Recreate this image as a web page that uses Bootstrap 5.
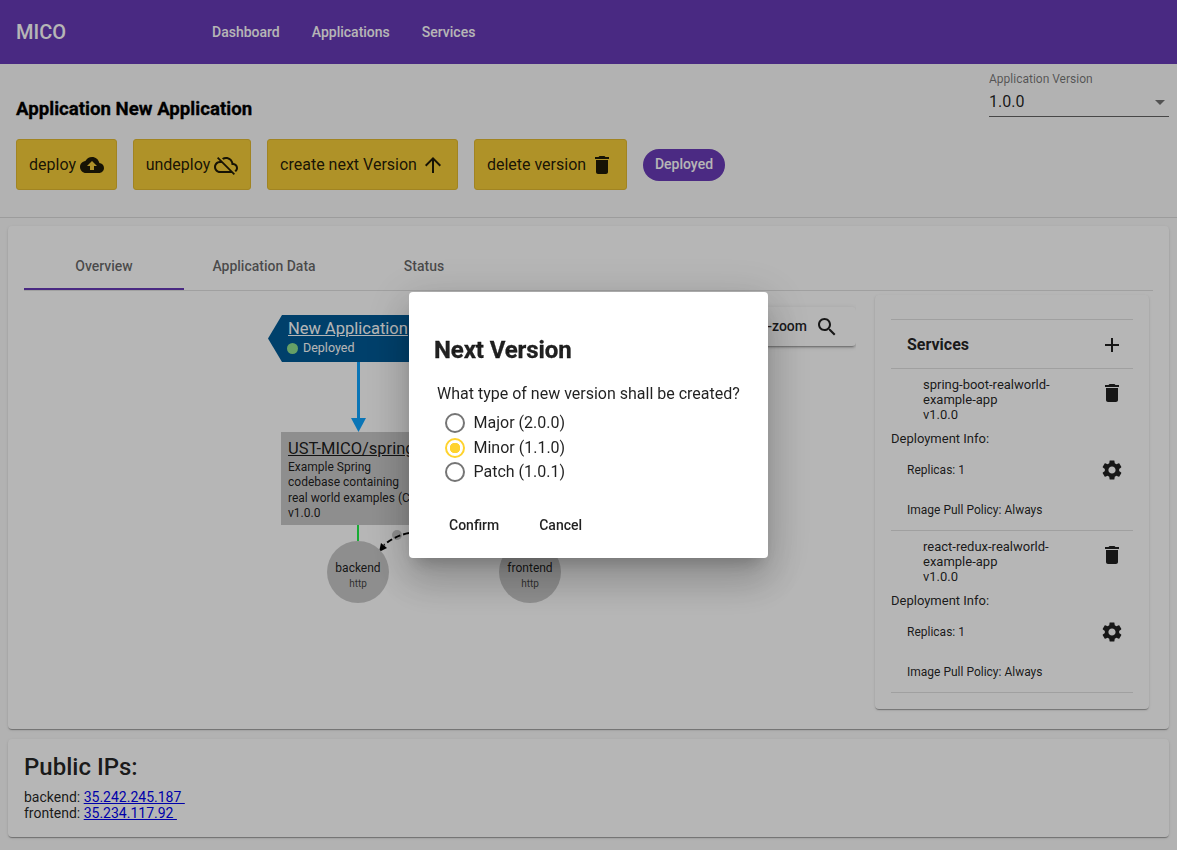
<!DOCTYPE html>
<html lang="en">
<head>
<meta charset="utf-8">
<title>MICO</title>
<link rel="stylesheet" href="https://cdn.jsdelivr.net/npm/bootstrap@5.3.0/dist/css/bootstrap.min.css">
<style>
html,body{height:850px;overflow:hidden}
body{font-family:Roboto,"Liberation Sans",sans-serif;background:#fafafa;color:rgba(0,0,0,.87);font-size:14px}
svg{display:block;fill:currentColor}
.topbar{height:64px;background:#673ab7;color:#fff;padding:0 16px}
.brand{font-size:20px;font-weight:500;width:180px}
.toplink{font-size:14px;font-weight:500;color:#fff;padding:0 16px;text-decoration:none}
.apphead{height:154px;padding:0 8px 0 16px;border-bottom:1px solid rgba(0,0,0,.12)}
.apptitle{font-size:18.65px;font-weight:700;color:#000;margin:0;line-height:24px;padding-top:33px;-webkit-text-stroke:.3px #000}
.verbox{width:180px;margin-top:8px;height:45px;border-bottom:1px solid rgba(0,0,0,.6);flex:none}
.verlabel{font-size:12px;line-height:14px;color:rgba(0,0,0,.54)}
.verline{margin-top:6px}
.vervalue{font-size:16px;line-height:20px}
.vercaret{width:0;height:0;border-left:5px solid transparent;border-right:5px solid transparent;border-top:5px solid rgba(0,0,0,.54);margin-right:4px}
.actionrow{margin-top:18px;gap:16px}
.actbtn{height:51px;padding:0;background:#f6cd38;border:1px solid #e2ba30;border-radius:3px;color:rgba(0,0,0,.87);font-size:16px;display:flex;align-items:center;justify-content:center;gap:4px;line-height:20px}
.wdeploy{width:101px}
.wundeploy{width:118px}
.wnext{width:191px}
.wdelete{width:153px}
.statepill{width:82px;height:32px;border-radius:16px;background:#6a3cb8;color:#fff;font-size:14px;font-weight:500;display:flex;align-items:center;justify-content:center}
.sheet{background:#fff;border-radius:4px;box-shadow:0 2px 1px -1px rgba(0,0,0,.2),0 1px 1px 0 rgba(0,0,0,.14),0 1px 3px 0 rgba(0,0,0,.12);margin:0 8px}
.mainsheet{height:503px;margin-top:8px;padding:16px 16px 0}
.tabstrip{height:49px;border-bottom:1px solid rgba(0,0,0,.12)}
.tabcell{width:160px;text-align:center;font-size:14px;font-weight:500;color:rgba(0,0,0,.6);line-height:48px;height:48px}
.tabcell.on{border-bottom:2px solid #673ab7}
.tabbody{gap:19px;margin-top:4px}
.graph{width:832px;height:414px;position:relative;flex:none;overflow:hidden}
.graph svg.edges{position:absolute;left:0;top:0}
.zoombtn{position:absolute;right:0;top:12px;height:39px;width:150px;background:#fff;border-radius:4px;box-shadow:0 3px 1px -2px rgba(0,0,0,.2),0 2px 2px 0 rgba(0,0,0,.14),0 1px 5px 0 rgba(0,0,0,.12);display:flex;align-items:center;justify-content:flex-end;padding-right:17px;gap:8px;font-weight:500;font-size:14px}
.appnode{position:absolute;left:244px;top:20px;width:200px;height:47px;color:#fff;padding:2px 0 0 20px;line-height:1}
.appnode-shape{position:absolute;left:0;top:0}
.appnode-name{position:relative;font-size:16.5px;line-height:24px;text-decoration:underline;display:block;white-space:nowrap}
.appnode-state{position:relative;font-size:12.500px;line-height:14px;display:flex;align-items:center;gap:5px;margin-left:-1px}
.statedot{width:11px;height:11px;border-radius:50%;background:#8fe08f}
.svcnode{position:absolute;left:257px;top:137px;width:220px;height:93px;background:#c8c8c8;padding:7px 7px;font-size:12px;line-height:15.3px;overflow:hidden;white-space:nowrap}
.svcnode-name{font-size:16.5px;line-height:20px;text-decoration:underline;display:block;color:inherit;margin-bottom:1px}
.ifnode{position:absolute;top:246px;width:62px;height:62px;border-radius:50%;background:#c8c8c8;text-align:center;font-size:12px;line-height:16px;padding-top:19px}
.ifnode small{display:block;font-size:10px;line-height:16px;color:rgba(0,0,0,.7)}
.svcpanel{width:274px;height:414px;background:#fff;border-radius:4px;padding:24px 16px 0;flex:none;box-shadow:0 2px 1px -1px rgba(0,0,0,.2),0 1px 1px 0 rgba(0,0,0,.14),0 1px 3px 0 rgba(0,0,0,.12)}
.svchead{height:50px;border-top:1px solid rgba(0,0,0,.12);border-bottom:1px solid rgba(0,0,0,.12);padding:2px 9px 0 16px;font-size:16px;font-weight:700}
.svcitem{height:162px;border-bottom:1px solid rgba(0,0,0,.12);font-size:13px;line-height:15px;color:rgba(0,0,0,.87)}
.svcname{padding:8px 0 0 32px;width:190px;height:60px}
.svctop{padding:0 9px 0 0}
.delwrap{padding-top:12px}
.depinfo{height:17px;line-height:17px;margin-top:1px}
.replrow{height:40px;margin-top:3px;padding:0 9px 0 16px;font-size:12px}
.pullrow{height:40px;padding:0 0 0 16px;font-size:12px}
.ipsheet{height:98px;margin-top:10px;padding:16px;line-height:16px}
.iptitle{font-size:24px;font-weight:500;line-height:24px;margin:0 0 10px}
.iplink{color:#0000ee;text-decoration:underline}
.dimlayer{position:fixed;inset:0;background:rgba(0,0,0,.288);z-index:1050}
.nextmodal{z-index:1060}
.nextdialog{width:359px;max-width:359px;margin:292px 0 0 409px}
.nextcontent{height:266px;border:0;border-radius:4px;padding:24px;box-shadow:0 11px 15px -7px rgba(0,0,0,.2),0 24px 38px 3px rgba(0,0,0,.14),0 9px 46px 8px rgba(0,0,0,.12)}
.nexttitle{font-size:24px;font-weight:700;line-height:32px;margin:18px 0 0 1px;letter-spacing:-.1px;-webkit-text-stroke:.3px rgba(0,0,0,.87)}
.nextq{font-size:16px;line-height:20px;margin:18px 0 7px 4px}
.choice{display:flex;flex:none;align-items:center;height:24.5px;min-height:0;margin:0 0 0 12px;padding:0;font-size:16px;gap:8.500px;color:rgba(0,0,0,.87)}
.choice .form-check-input{width:20px;height:20px;margin:0;float:none;border:2px solid #757575;background-color:#fff;box-shadow:none}
.choice .form-check-input:checked{border-color:#ffd32e;background-color:#fff;background-image:radial-gradient(circle,#ffd32e 0 5px,transparent 5.5px)}
.nextactions{margin:22.5px 0 0;gap:8px}
.txtbtn{font-size:14px;font-weight:500;color:rgba(0,0,0,.87);padding:0 16px;line-height:36px;border:0;background:none}
</style>
</head>
<body>
<nav class="topbar d-flex align-items-center">
  <div class="brand">MICO</div>
  <a class="toplink" href="#">Dashboard</a>
  <a class="toplink" href="#">Applications</a>
  <a class="toplink" href="#">Services</a>
</nav>

<header class="apphead d-flex justify-content-between">
  <div>
    <h1 class="apptitle">Application New Application</h1>
    <div class="d-flex align-items-center actionrow">
      <button class="actbtn wdeploy" type="button">deploy <svg width="24" height="24" viewBox="0 0 24 24"><path d="M19.35 10.04C18.67 6.59 15.64 4 12 4 9.11 4 6.6 5.64 5.35 8.04 2.34 8.36 0 10.91 0 14c0 3.31 2.69 6 6 6h13c2.76 0 5-2.24 5-5 0-2.64-2.05-4.78-4.65-4.96zM14 13v4h-4v-4H7l5-5 5 5h-3z"/></svg></button>
      <button class="actbtn wundeploy" type="button">undeploy <svg width="24" height="24" viewBox="0 0 24 24"><path d="M19.35 10.04C18.67 6.59 15.64 4 12 4c-1.48 0-2.85.43-4.01 1.17l1.46 1.46C10.21 6.23 11.08 6 12 6c3.04 0 5.5 2.46 5.5 5.5v.5H19c1.66 0 3 1.34 3 3 0 1.13-.64 2.11-1.56 2.62l1.45 1.45C23.16 18.16 24 16.68 24 15c0-2.64-2.05-4.78-4.65-4.96zM3 5.27l2.75 2.74C2.56 8.15 0 10.77 0 14c0 3.31 2.69 6 6 6h11.73l2 2L21 20.73 4.27 4 3 5.27zM7.73 10l8 8H6c-2.21 0-4-1.79-4-4s1.79-4 4-4h1.73z"/></svg></button>
      <button class="actbtn wnext" type="button">create next Version <svg width="24" height="24" viewBox="0 0 24 24"><path d="M4 12l1.41 1.41L11 7.83V20h2V7.83l5.58 5.59L20 12l-8-8-8 8z"/></svg></button>
      <button class="actbtn wdelete" type="button">delete version <svg width="24" height="24" viewBox="0 0 24 24"><path d="M6 19c0 1.1.9 2 2 2h8c1.1 0 2-.9 2-2V7H6v12zM19 4h-3.5l-1-1h-5l-1 1H5v2h14V4z"/></svg></button>
      <div class="statepill">Deployed</div>
    </div>
  </div>
  <div class="verbox">
    <div class="verlabel">Application Version</div>
    <div class="d-flex align-items-center justify-content-between verline">
      <div class="vervalue">1.0.0</div><div class="vercaret"></div>
    </div>
  </div>
</header>

<main class="sheet mainsheet">
  <div class="tabstrip d-flex">
    <div class="tabcell on">Overview</div>
    <div class="tabcell">Application Data</div>
    <div class="tabcell">Status</div>
  </div>
  <div class="d-flex tabbody">
    <div class="graph">
      <svg class="edges" width="832" height="414" viewBox="0 0 832 414">
        <rect x="333" y="67" width="3" height="58" fill="#0ea5ff"/>
        <path d="M327 123h15l-7.500 14z" fill="#0ea5ff"/>
        <rect x="333" y="230" width="2" height="16" fill="#22f04a"/>
        <circle cx="373" cy="240" r="5" fill="#c8c8c8"/>
        <path d="M385 238C374 240 366 245 360 250" fill="none" stroke="#000" stroke-width="2" stroke-dasharray="6 3"/>
        <path d="M355 257l2-9 6 5z" fill="#000"/>
      </svg>
      <div class="appnode">
        <svg class="appnode-shape" width="200" height="47" viewBox="0 0 200 47"><path d="M14 0H200V47H14L0 23.500z" fill="#005a96"/></svg>
        <a class="appnode-name text-white">New Application</a>
        <div class="appnode-state"><span class="statedot"></span>Deployed</div>
      </div>
      <div class="svcnode">
        <a class="svcnode-name">UST-MICO/spring-boot</a>
        Example Spring<br>codebase containing<br>real world examples (CRUD<br>v1.0.0
      </div>
      <div class="ifnode" style="left:303px">backend<small>http</small></div>
      <div class="ifnode" style="left:475px">frontend<small>http</small></div>
      <div class="zoombtn">Fit-to-zoom <svg width="24" height="24" viewBox="0 0 24 24"><path d="M15.500 14h-.79l-.28-.27C15.410 12.590 16 11.110 16 9.500 16 5.910 13.090 3 9.500 3S3 5.910 3 9.500 5.910 16 9.500 16c1.610 0 3.090-.59 4.230-1.570l.27.28v.79l5 4.990L20.490 19l-4.990-5zm-6 0C7.010 14 5 11.990 5 9.500S7.010 5 9.500 5 14 7.010 14 9.500 11.990 14 9.500 14z"/></svg></div>
    </div>
    <aside class="svcpanel">
      <div class="svchead d-flex align-items-center justify-content-between">
        <span>Services</span>
        <svg width="24" height="24" viewBox="0 0 24 24"><path d="M19 13h-6v6h-2v-6H5v-2h6V5h2v6h6v2z"/></svg>
      </div>
      <div class="svcitem">
        <div class="d-flex justify-content-between svctop">
          <div class="svcname">spring-boot-realworld-<br>example-app<br>v1.0.0</div>
          <div class="delwrap"><svg width="24" height="24" viewBox="0 0 24 24"><path d="M6 19c0 1.100.9 2 2 2h8c1.100 0 2-.9 2-2V7H6v12zM19 4h-3.500l-1-1h-5l-1 1H5v2h14V4z"/></svg></div>
        </div>
        <div class="depinfo">Deployment Info:</div>
        <div class="replrow d-flex align-items-center justify-content-between"><span>Replicas: 1</span><svg width="24" height="24" viewBox="0 0 24 24"><path d="M19.140 12.940c.04-.3.06-.61.06-.94 0-.32-.02-.64-.07-.94l2.030-1.580c.18-.14.23-.41.12-.61l-1.920-3.320c-.12-.22-.37-.29-.59-.22l-2.390.96c-.5-.38-1.030-.7-1.620-.94l-.36-2.540c-.04-.24-.24-.41-.48-.41h-3.840c-.24 0-.43.17-.47.41l-.36 2.540c-.59.24-1.130.57-1.620.94l-2.390-.96c-.22-.08-.47 0-.59.22L2.740 8.870c-.12.21-.08.47.12.61l2.030 1.580c-.05.3-.09.63-.09.94s.02.64.07.94l-2.030 1.580c-.18.14-.23.41-.12.61l1.920 3.320c.12.22.37.29.59.22l2.390-.96c.5.38 1.030.7 1.620.94l.36 2.540c.05.24.24.41.48.41h3.840c.24 0 .44-.17.47-.41l.36-2.540c.59-.24 1.130-.56 1.620-.94l2.390.96c.22.08.47 0 .59-.22l1.920-3.320c.12-.22.07-.47-.12-.61l-2.010-1.580zM12 15.600c-1.980 0-3.600-1.620-3.600-3.600s1.620-3.600 3.600-3.600 3.600 1.620 3.600 3.600-1.620 3.600-3.600 3.600z"/></svg></div>
        <div class="pullrow d-flex align-items-center">Image Pull Policy: Always</div>
      </div>
      <div class="svcitem">
        <div class="d-flex justify-content-between svctop">
          <div class="svcname">react-redux-realworld-<br>example-app<br>v1.0.0</div>
          <div class="delwrap"><svg width="24" height="24" viewBox="0 0 24 24"><path d="M6 19c0 1.100.9 2 2 2h8c1.100 0 2-.9 2-2V7H6v12zM19 4h-3.500l-1-1h-5l-1 1H5v2h14V4z"/></svg></div>
        </div>
        <div class="depinfo">Deployment Info:</div>
        <div class="replrow d-flex align-items-center justify-content-between"><span>Replicas: 1</span><svg width="24" height="24" viewBox="0 0 24 24"><path d="M19.140 12.940c.04-.3.06-.61.06-.94 0-.32-.02-.64-.07-.94l2.030-1.580c.18-.14.23-.41.12-.61l-1.920-3.320c-.12-.22-.37-.29-.59-.22l-2.390.96c-.5-.38-1.030-.7-1.620-.94l-.36-2.540c-.04-.24-.24-.41-.48-.41h-3.840c-.24 0-.43.17-.47.41l-.36 2.540c-.59.24-1.130.57-1.620.94l-2.390-.96c-.22-.08-.47 0-.59.22L2.740 8.870c-.12.21-.08.47.12.61l2.030 1.580c-.05.3-.09.63-.09.94s.02.64.07.94l-2.030 1.580c-.18.14-.23.41-.12.61l1.920 3.320c.12.22.37.29.59.22l2.390-.96c.5.38 1.030.7 1.620.94l.36 2.540c.05.24.24.41.48.41h3.840c.24 0 .44-.17.47-.41l.36-2.540c.59-.24 1.130-.56 1.620-.94l2.390.96c.22.08.47 0 .59-.22l1.920-3.320c.12-.22.07-.47-.12-.61l-2.010-1.580zM12 15.600c-1.980 0-3.600-1.620-3.600-3.600s1.620-3.600 3.600-3.600 3.600 1.620 3.600 3.600-1.620 3.600-3.600 3.600z"/></svg></div>
        <div class="pullrow d-flex align-items-center">Image Pull Policy: Always</div>
      </div>
    </aside>
  </div>
</main>

<section class="sheet ipsheet">
  <h2 class="iptitle">Public IPs:</h2>
  <div>backend: <a class="iplink" href="#">35.242.245.187&nbsp;</a></div>
  <div>frontend: <a class="iplink" href="#">35.234.117.92&nbsp;</a></div>
</section>

<div class="dimlayer"></div>
<div class="modal d-block nextmodal" tabindex="-1" role="dialog">
  <div class="modal-dialog nextdialog">
    <div class="modal-content nextcontent">
      <h2 class="nexttitle">Next Version</h2>
      <p class="nextq">What type of new version shall be created?</p>
      <div class="form-check choice"><input class="form-check-input" type="radio" name="nv" id="nv1"><label for="nv1">Major (2.0.0)</label></div>
      <div class="form-check choice"><input class="form-check-input" type="radio" name="nv" id="nv2" checked><label for="nv2">Minor (1.1.0)</label></div>
      <div class="form-check choice"><input class="form-check-input" type="radio" name="nv" id="nv3"><label for="nv3">Patch (1.0.1)</label></div>
      <div class="d-flex nextactions">
        <button class="btn txtbtn" type="button">Confirm</button>
        <button class="btn txtbtn" type="button">Cancel</button>
      </div>
    </div>
  </div>
</div>
<script src="https://cdn.jsdelivr.net/npm/bootstrap@5.3.0/dist/js/bootstrap.bundle.min.js"></script>
</body>
</html>
